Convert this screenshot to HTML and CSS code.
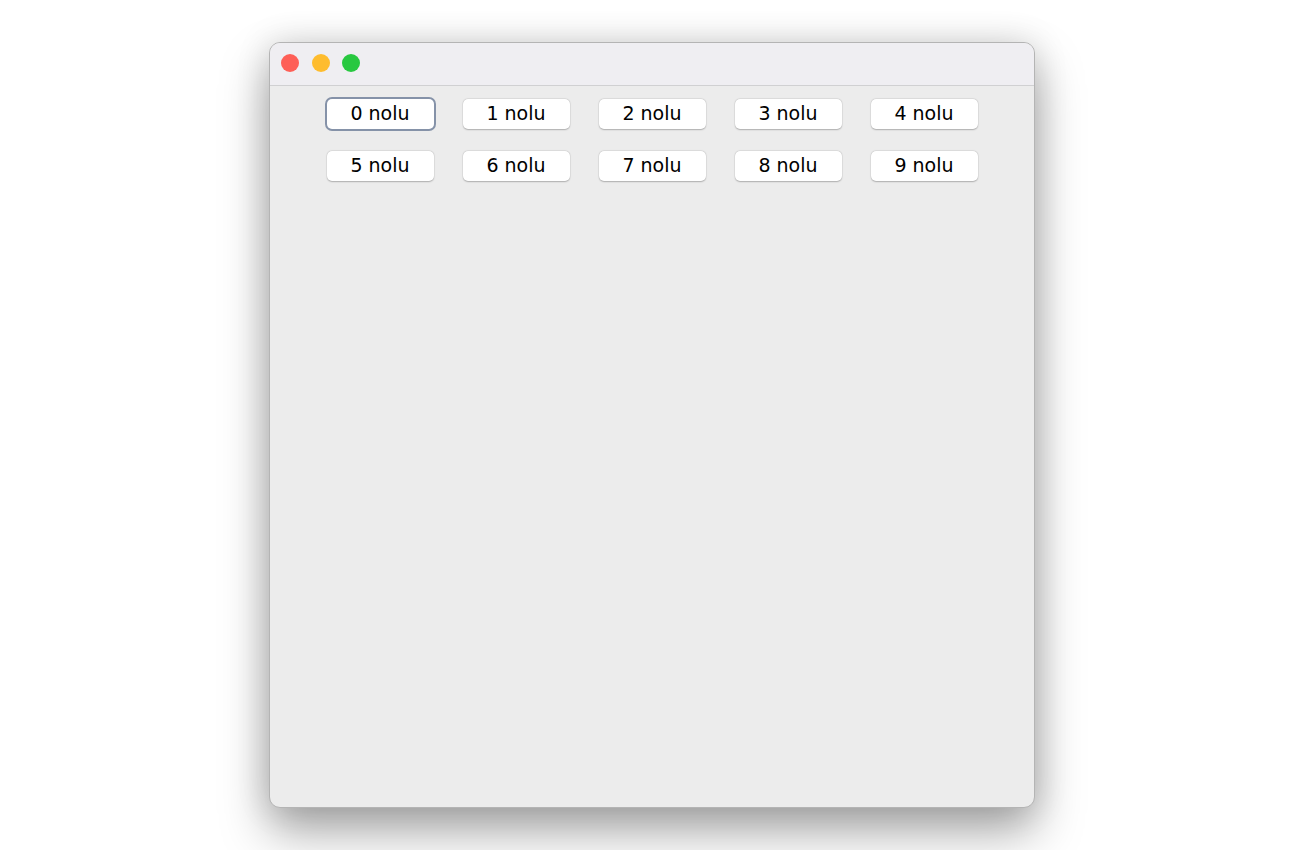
FILE: index.html
```html
<!DOCTYPE html>
<html>
<head>
<meta charset="utf-8">
<link rel="stylesheet" href="styles.css">
</head>
<body>
<div class="window">
  <div class="titlebar">
    <span class="light red"></span>
    <span class="light yellow"></span>
    <span class="light green"></span>
  </div>
  <div class="content">
    <div class="row">
      <button class="btn focused">0 nolu</button>
      <button class="btn">1 nolu</button>
      <button class="btn">2 nolu</button>
      <button class="btn">3 nolu</button>
      <button class="btn">4 nolu</button>
    </div>
    <div class="row">
      <button class="btn">5 nolu</button>
      <button class="btn">6 nolu</button>
      <button class="btn">7 nolu</button>
      <button class="btn">8 nolu</button>
      <button class="btn">9 nolu</button>
    </div>
  </div>
</div>
</body>
</html>
```
FILE: styles.css
```css
html, body {
  margin: 0;
  padding: 0;
  background: #ffffff;
  width: 1300px;
  height: 850px;
  overflow: hidden;
}
body {
  padding: 42px 0 0 269px;
  box-sizing: border-box;
  font-family: "DejaVu Sans", "Open Sans", sans-serif;
}
.window {
  width: 766px;
  height: 766px;
  box-sizing: border-box;
  border-radius: 11px;
  background: #ececec;
  border: 1px solid #b4b4b4;
  box-shadow: 0 24px 48px rgba(0,0,0,0.34), 0 0 34px rgba(0,0,0,0.14);
  overflow: hidden;
  display: flex;
  flex-direction: column;
}
.titlebar {
  height: 43px;
  box-sizing: border-box;
  background: #efeef2;
  border-bottom: 1px solid #d0d0d2;
  display: flex;
  align-items: center;
  padding-left: 11px;
  gap: 12.5px;
  flex-shrink: 0;
}
.light {
  width: 18px;
  height: 18px;
  flex: 0 0 18px;
  border-radius: 50%;
  display: block;
  margin-top: -2px;
}
.red { background: #fe5f57; }
.yellow { background: #febc2e; }
.green { background: #28c840; }
.content {
  padding-top: 13px;
  display: flex;
  flex-direction: column;
  gap: 22px;
}
.row {
  display: flex;
  justify-content: center;
  gap: 29px;
}
.btn {
  width: 107px;
  height: 30px;
  box-sizing: border-box;
  border: none;
  border-radius: 5px;
  background: #ffffff;
  box-shadow: 0 0.5px 1.5px rgba(0,0,0,0.25), 0 0 0 0.5px rgba(0,0,0,0.05);
  font-family: "DejaVu Sans", "Open Sans", sans-serif;
  font-size: 19px;
  color: #000;
  padding: 0 0 2px 0;
  margin: 0;
  line-height: 28px;
}
.btn.focused {
  box-shadow: 0 0 0 2px #8592a8;
}
```
